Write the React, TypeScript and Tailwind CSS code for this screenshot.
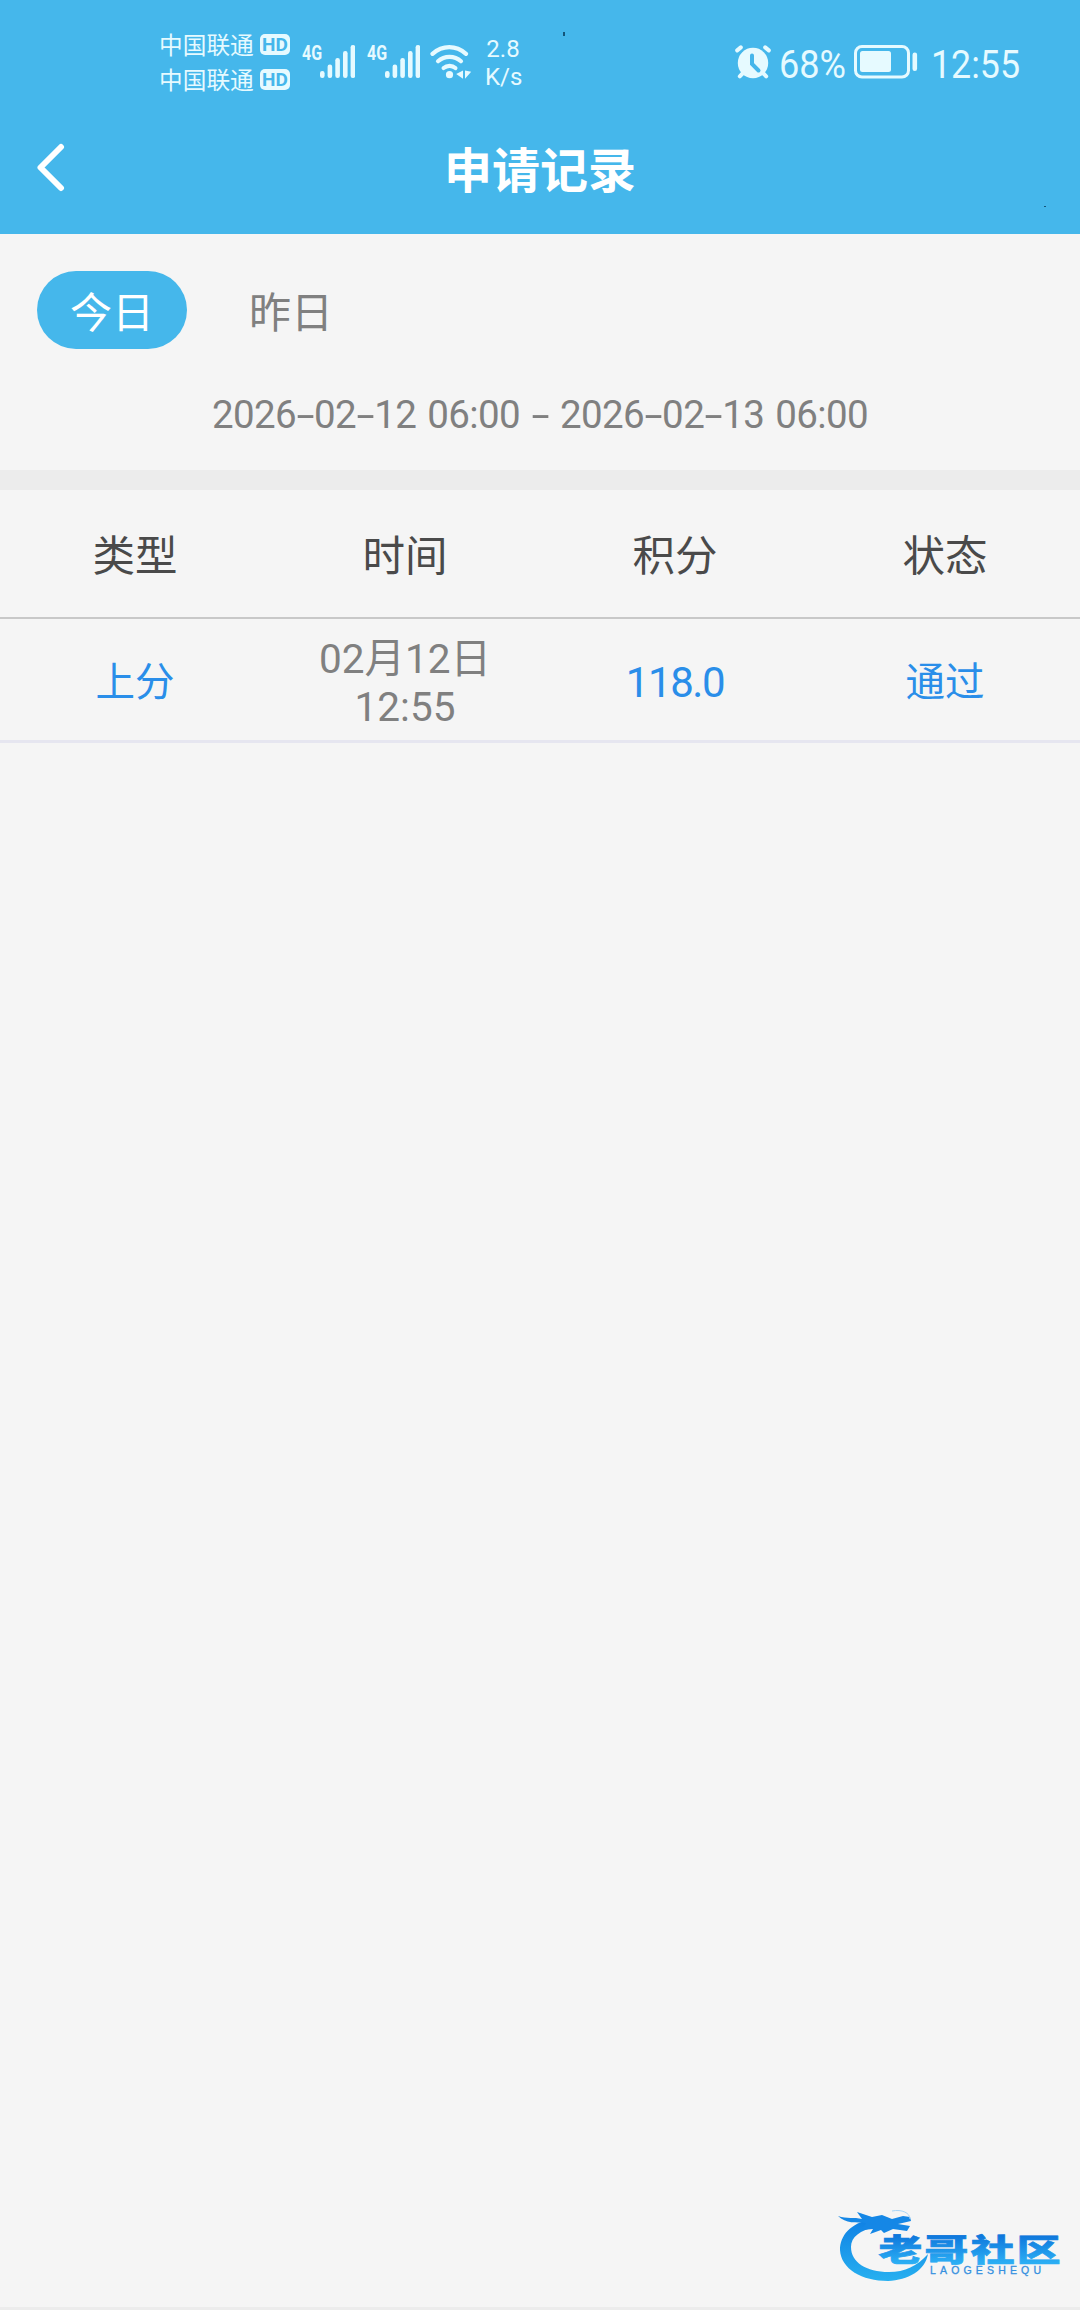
import clsx from "clsx"

const tabs = [
  { name: "今日", active: true },
  { name: "昨日", active: false },
]

const range = ["2026-02-12 06:00", "-", "2026-02-13 06:00"]

const columns = ["类型", "时间", "积分", "状态"]

const records = [
  { type: "上分", date: "02月12日", time: "12:55", points: "118.0", status: "通过" },
]

const signalBars = [
  { x: 0, h: 7 },
  { x: 7.6, h: 13.5 },
  { x: 15.3, h: 20 },
  { x: 23, h: 27 },
  { x: 30.6, h: 33 },
]

function Carrier() {
  return (
    <div className="flex h-[35px] items-center gap-[6px]">
      <span className="w-[95px] pt-[3px] text-[23.7px] leading-[35px] whitespace-nowrap">
        中国联通
      </span>
      <span className="flex h-[21px] w-[30px] items-center justify-center rounded-[5px] bg-[#e6faff] font-[Roboto] text-[19px] leading-[21px] font-bold text-[#45b6eb]">
        HD
      </span>
    </div>
  )
}

function Signal() {
  return (
    <div className="flex h-[33px] w-[53px] items-start">
      <span className="w-[18px] origin-left scale-x-[0.76] font-[Roboto] text-[21px] leading-[16px] font-bold">
        4G
      </span>
      <svg className="h-[33px] w-[35px] shrink-0" viewBox="0 0 35 33" fill="currentColor">
        {signalBars.map((bar) => (
          <rect key={bar.x} x={bar.x} y={33 - bar.h} width="4.6" height={bar.h} rx="2.2" />
        ))}
      </svg>
    </div>
  )
}

function WifiIcon() {
  return (
    <svg className="h-[34px] w-[42px]" viewBox="0 0 42 34" fill="none">
      <g stroke="currentColor" strokeWidth="4.2" strokeLinecap="round">
        <path d="M2.5 8.8C12.5 0 26 0 36 8.8" />
        <path d="M8 16.2C14.5 10.4 24.5 10.4 31 16.2" />
        <path d="M13.6 23C17 20.2 22.2 20.2 25.4 23" />
      </g>
      <circle cx="19.5" cy="29.7" r="3.6" fill="currentColor" />
      <path d="M33 25.5v8.2l-6.8-4.6zM35 25.5v8.2l6.2-7z" fill="currentColor" />
    </svg>
  )
}

function AlarmIcon() {
  return (
    <svg className="h-[34px] w-[36px]" viewBox="0 0 36 34" fill="none">
      <circle cx="18" cy="18" r="15.2" fill="currentColor" />
      <g stroke="currentColor" strokeWidth="4" strokeLinecap="round">
        <path d="M2.2 5.4L5.8 2.4M33.8 5.4L30.2 2.4" />
        <path d="M4.8 31.3L8 28M31.2 31.3L28 28" />
      </g>
      <path d="M17 10.5V19L23.5 25.5" stroke="#45b6eb" strokeWidth="4" strokeLinecap="round" />
    </svg>
  )
}

function BatteryIcon() {
  return (
    <svg className="h-[34px] w-[64px]" viewBox="0 0 64 34" fill="none">
      <rect x="1.5" y="1.5" width="53" height="30.5" rx="6.5" stroke="currentColor" strokeWidth="3" />
      <rect x="6" y="6" width="31" height="21" rx="2.5" fill="currentColor" />
      <rect x="58.5" y="7.5" width="4.6" height="18.5" rx="2.2" fill="currentColor" />
    </svg>
  )
}

function StatusBar() {
  return (
    <div className="flex h-[102px] items-start pr-[60px] pl-[159px] text-[#e6faff]">
      <div className="pt-[27px]">
        <Carrier />
        <Carrier />
      </div>
      <div className="ml-[12px] flex gap-[12px] pt-[45px]">
        <Signal />
        <Signal />
      </div>
      <div className="ml-[10px] pt-[45px]">
        <WifiIcon />
      </div>
      <div className="ml-[13px] w-[36px] pt-[35px] text-center font-[Roboto] text-[24px] leading-[28px]">
        <div>2.8</div>
        <div>K/s</div>
      </div>
      <div className="ml-auto flex pt-[45px]">
        <AlarmIcon />
        <span className="ml-[8px] w-[69px] origin-left scale-x-[0.95] font-[Roboto] text-[38px] leading-[40px] whitespace-nowrap">
          68%
        </span>
        <span className="ml-[6px]">
          <BatteryIcon />
        </span>
        <span className="ml-[13px] w-[89px] origin-left scale-x-[0.94] font-[Roboto] text-[38px] leading-[40px]">
          12:55
        </span>
      </div>
    </div>
  )
}

function TitleBar() {
  return (
    <div className="grid h-[132px] grid-cols-3 items-center text-white">
      <button type="button" className="pl-[35px]">
        <svg className="h-[50px] w-[30px]" viewBox="0 0 30 50" fill="none">
          <path
            d="M26 4L5.5 24.5L26 45"
            stroke="currentColor"
            strokeWidth="6"
            strokeLinecap="round"
            strokeLinejoin="round"
          />
        </svg>
      </button>
      <h1 className="pt-[7px] text-center text-[48px] leading-[60px] font-bold">申请记录</h1>
    </div>
  )
}

// Roboto's hyphen is short, so each one gets a wider box of its own
function RangeText({ text }: { text: string }) {
  return text.split(/(-)/).map((part, i) =>
    part === "-" ? (
      <span key={i} className="inline-block w-[18px] scale-x-[1.7] text-center">
        {part}
      </span>
    ) : (
      <span key={i}>{part}</span>
    )
  )
}

function SiteLogo() {
  return (
    <svg className="absolute right-[14px] bottom-[23px] h-[78px] w-[230px]" viewBox="836 2206 230 78">
      <defs>
        <linearGradient id="ring" x1="0" y1="0" x2="0" y2="1">
          <stop offset="0" stopColor="#0f80e4" />
          <stop offset="1" stopColor="#27b0f0" />
        </linearGradient>
        <linearGradient id="name" x1="0" y1="0" x2="0" y2="1">
          <stop offset="0.25" stopColor="#0f78dc" />
          <stop offset="0.85" stopColor="#2baef4" />
        </linearGradient>
      </defs>
      <path
        d="M872 2219C850 2223 840 2236 840 2250C841 2269 862 2281 888 2281C908 2280 925 2271 928 2254C917 2266 905 2272 889 2272C866 2272 851 2262 851 2247C851 2237 860 2230 876 2227Z"
        fill="url(#ring)"
      />
      <path
        d="M838 2216C847 2219 854 2217 862 2219L857 2212L872 2217L882 2215L892 2219L903 2216L910 2217L911 2221L898 2224L910 2226L907 2231L893 2229L884 2233L881 2230L870 2234L873 2229L862 2230L866 2223C856 2222 846 2224 838 2216Z"
        fill="#1587e6"
      />
      <path d="M892 2211C902 2209 910 2213 910 2219" stroke="#a9d5f7" strokeWidth="1" fill="none" />
      <text
        transform="translate(878.5 2260.5) scale(1.46 1.02)"
        className="font-['Noto_Sans_CJK_SC'] text-[30px] font-black"
        letterSpacing="1.6"
        fill="url(#name)"
        stroke="url(#name)"
        strokeWidth="0.7"
      >
        老哥社区
      </text>
      <text
        x="930"
        y="2274"
        textLength="111"
        className="font-['Liberation_Sans'] text-[10.5px]"
        fill="#3490e0"
        stroke="#3490e0"
        strokeWidth="0.3"
      >
        LAOGESHEQU
      </text>
    </svg>
  )
}

export default function App() {
  return (
    <div className="relative flex h-[2310px] w-[1080px] flex-col overflow-hidden border-b-[3px] border-[#ececec] bg-[#f5f5f5] font-[Roboto,'Noto_Sans_CJK_SC',sans-serif]">
      <header className="h-[234px] bg-[#45b7eb]">
        <StatusBar />
        <TitleBar />
      </header>

      <section className="h-[236px] px-[37px] pt-[37px]">
        <div className="flex gap-[29px]">
          {tabs.map((tab) => (
            <button
              key={tab.name}
              type="button"
              className={clsx(
                "h-[78px] w-[150px] rounded-full pt-[8px] text-[42px] leading-[70px]",
                tab.active ? "bg-[#45b7eb] text-white" : "text-[#808080]"
              )}
            >
              {tab.name}
            </button>
          ))}
        </div>
        <p className="mt-[41px] text-center text-[38.5px] leading-[50px] tracking-[-0.6px] whitespace-nowrap text-[#808080] [word-spacing:2px]">
          <RangeText text={range.join(" ")} />
        </p>
      </section>

      <div className="h-[20px] bg-[#ececec]" />

      <div className="grid h-[129px] grid-cols-4 items-center border-b-2 border-[#c8c8c8] pt-[7px] text-center text-[42.5px] text-[#4a4a4a]">
        {columns.map((column) => (
          <div key={column}>{column}</div>
        ))}
      </div>

      {records.map((record) => (
        <div
          key={record.date + record.time}
          className="grid h-[124px] grid-cols-4 items-center border-b-[3px] border-[#e6e6f0] pt-[6px] text-center text-[39.5px] text-[#2a8ee9]"
        >
          <div>{record.type}</div>
          <div className="text-[40.5px] leading-[48px] text-[#808080]">
            <div>{record.date}</div>
            <div>{record.time}</div>
          </div>
          <div className="text-[42px] tracking-[-1.4px]">{record.points}</div>
          <div>{record.status}</div>
        </div>
      ))}

      <SiteLogo />

      {/* stray specks on the header */}
      <span className="absolute top-[32px] left-[563px] h-[4px] w-[2px] bg-[#14557a]" />
      <span className="absolute top-[206px] left-[1044px] h-px w-[2px] bg-[#14557a]" />
    </div>
  )
}
